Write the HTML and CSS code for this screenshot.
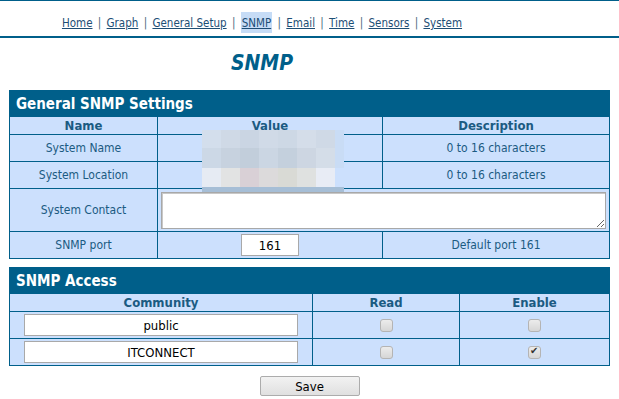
FILE: index.html
```html
<!DOCTYPE html>
<html lang="en">
<head>
    <meta charset="UTF-8">
    <title>SNMP</title>
    <link rel="stylesheet" href="styles.css">
</head>
<body>
    <header class="top">
        <nav class="menu">
            <a href="#">Home</a> <span class="sep">|</span>
            <a href="#">Graph</a> <span class="sep">|</span>
            <a href="#">General Setup</a> <span class="sep">|</span>
            <a href="#" class="active">SNMP</a> <span class="sep">|</span>
            <a href="#">Email</a> <span class="sep">|</span>
            <a href="#">Time</a> <span class="sep">|</span>
            <a href="#">Sensors</a> <span class="sep">|</span>
            <a href="#">System</a>
        </nav>
    </header>

    <h1 class="page-title">SNMP</h1>

    <form class="settings">
        <div class="panel">
            <table class="grid">
                <colgroup>
                    <col class="name-col"><col class="value-col"><col>
                </colgroup>
                <tr class="title-row"><th colspan="3">General SNMP Settings</th></tr>
                <tr class="head-row"><th>Name</th><th>Value</th><th>Description</th></tr>
                <tr>
                    <td>System Name</td>
                    <td><input type="text" class="field" value=""></td>
                    <td>0 to 16 characters</td>
                </tr>
                <tr>
                    <td>System Location</td>
                    <td><input type="text" class="field" value=""></td>
                    <td>0 to 16 characters</td>
                </tr>
                <tr class="tall">
                    <td>System Contact</td>
                    <td colspan="2"><textarea class="contact"></textarea></td>
                </tr>
                <tr>
                    <td>SNMP port</td>
                    <td><input type="text" class="port" value="161"></td>
                    <td>Default port 161</td>
                </tr>
            </table>
            <!-- redacted values -->
            <div class="mosaic">
                <span class="m1"></span><span class="m2"></span><span class="m3"></span><span class="m4"></span><span class="m5"></span><span class="m6"></span><span class="m2"></span><span class="m7"></span>
                <span class="n1"></span><span class="n2"></span><span class="n3"></span><span class="n4"></span><span class="n5"></span><span class="n6"></span><span class="n7"></span><span class="m7"></span>
                <span class="p1"></span><span class="p2"></span><span class="p3"></span><span class="p4"></span><span class="p5"></span><span class="p6"></span><span class="p7"></span><span class="blank"></span>
                <span class="strip"></span>
            </div>
        </div>

        <div class="panel">
            <table class="grid">
                <colgroup>
                    <col class="community-col"><col class="read-col"><col>
                </colgroup>
                <tr class="title-row"><th colspan="3">SNMP Access</th></tr>
                <tr class="head-row"><th>Community</th><th>Read</th><th>Enable</th></tr>
                <tr>
                    <td><input type="text" class="community" value="public"></td>
                    <td><input type="checkbox" class="check"></td>
                    <td><input type="checkbox" class="check"></td>
                </tr>
                <tr>
                    <td><input type="text" class="community" value="ITCONNECT"></td>
                    <td><input type="checkbox" class="check"></td>
                    <td><input type="checkbox" class="check" checked></td>
                </tr>
            </table>
        </div>

        <div class="actions">
            <button type="button" class="save">Save</button>
        </div>
    </form>
</body>
</html>
```

FILE: styles.css
```css
:root {
    --dark-blue: #005f8a;
    --cell-blue: #cce0fd;
    --text-blue: #1b5b82;
}

body {
    margin: 0;
    padding: 0 9px;
    font-family: "DejaVu Sans Condensed", "DejaVu Sans", sans-serif;
    font-size: 12px;
    color: var(--text-blue);
    background: #ffffff;
    border-top: 1px solid var(--dark-blue);
}

.top {
    margin: 0 -9px;
    border-bottom: 2px solid var(--dark-blue);
    padding: 12px 0 2px;
}

.menu {
    width: 524px;
    text-align: center;
    font-size: 11.5px;
    line-height: 21px;
    color: #4d6b80;
}

.menu a {
    color: #1d4e75;
    text-decoration: underline;
}

.menu a.active {
    background: #c6dcf6;
    padding: 4px 1px 3px;
}

.sep {
    margin: 0 2px;
}

.page-title {
    width: 506px;
    margin: 13px 0 0;
    height: 39px;
    text-align: center;
    font-size: 21px;
    font-style: italic;
    font-weight: bold;
    color: var(--dark-blue);
}

.panel {
    position: relative;
    margin-bottom: 8px;
}

.grid {
    width: 100%;
    border-collapse: collapse;
    table-layout: fixed;
    border: 1px solid var(--dark-blue);
}

.name-col { width: 148px; }
.value-col { width: 225px; }
.community-col { width: 303px; }
.read-col { width: 147px; }

.grid td,
.grid th {
    border: 1px solid var(--dark-blue);
    background: var(--cell-blue);
    text-align: center;
    padding: 0;
    height: 26px;
}

.grid th {
    font-weight: bold;
    font-size: 13px;
}

.title-row th {
    background: var(--dark-blue);
    color: #ffffff;
    text-align: left;
    padding-left: 6px;
    font-size: 15px;
    height: 25px;
}

.head-row th {
    height: 17px;
    line-height: 15px;
}

.tall td {
    height: 42px;
}

.field {
    width: 128px;
    height: 20px;
    border: 1px solid #aaaaaa;
    box-sizing: border-box;
}

.contact {
    display: block;
    box-sizing: border-box;
    width: calc(100% - 6px);
    height: 37px;
    margin: 0 3px;
    border: 1px solid #a8a8a8;
    box-shadow: inset 1px 1px 0 #c8c8c8;
    resize: both;
}

.port,
.community {
    box-sizing: border-box;
    height: 22px;
    border: 1px solid #a9a9a9;
    text-align: center;
    font-family: "DejaVu Sans Condensed", "DejaVu Sans", sans-serif;
    font-size: 13px;
    color: #000000;
    padding: 0;
}

.port {
    width: 58px;
}

.community {
    width: 274px;
}

.check {
    -webkit-appearance: none;
    appearance: none;
    width: 13px;
    height: 13px;
    margin: 0;
    vertical-align: middle;
    border: 1px solid #b4b4b4;
    border-radius: 3px;
    background: linear-gradient(#ececec, #d6d6d6);
    position: relative;
}

.check:checked::after {
    content: "\2714";
    position: absolute;
    left: 1px;
    top: -2px;
    font-size: 10px;
    color: #333333;
}

.mosaic {
    position: absolute;
    left: 193px;
    top: 40px;
    display: grid;
    grid-template-columns: repeat(7, 19px) 9px;
    grid-template-rows: 18px 20px 19px 5px;
}

.mosaic .strip {
    grid-column: 1 / -1;
    background: #a6bed6;
}

.m1 { background: #d3deec; }
.m2 { background: #cfd9e6; }
.m3 { background: #cad5e3; }
.m4 { background: #d0dae7; }
.m5 { background: #cdd8e5; }
.m6 { background: #d4dde9; }
.m7 { background: #c9dcf5; }
.n1 { background: #ccd8e6; }
.n2 { background: #c7d2df; }
.n3 { background: #c2cedb; }
.n4 { background: #cbd6e3; }
.n5 { background: #c4d0dd; }
.n6 { background: #cdd6e2; }
.n7 { background: #d4dde8; }
.p1 { background: #e6ebf3; }
.p2 { background: #e2e3e3; }
.p3 { background: #d9d0d6; }
.p4 { background: #dcdadb; }
.p5 { background: #d9dad5; }
.p6 { background: #dfe1e0; }
.p7 { background: #e8ecf5; }
.blank { background: var(--cell-blue); }

.actions {
    text-align: center;
    padding-top: 2px;
}

.save {
    width: 100px;
    height: 20px;
    border: 1px solid #acacac;
    border-radius: 2px;
    background: linear-gradient(#f2f2f2, #e0e0e0);
    font-family: "DejaVu Sans Condensed", "DejaVu Sans", sans-serif;
    font-size: 13px;
    color: #000000;
    padding: 0;
}
```
